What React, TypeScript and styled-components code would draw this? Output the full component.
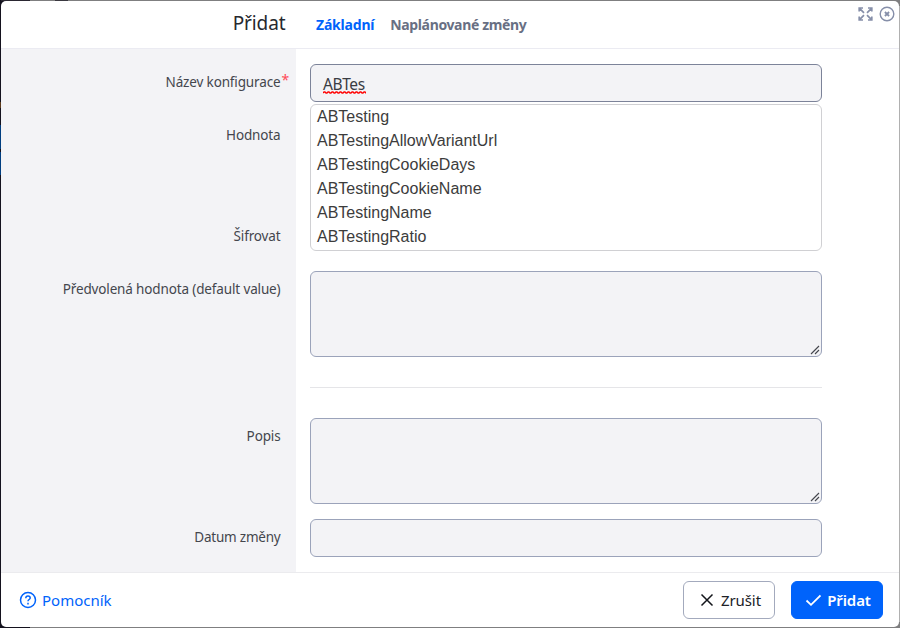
import React from "react";
import styled, { createGlobalStyle } from "styled-components";

const GlobalStyle = createGlobalStyle`
  *, *::before, *::after { box-sizing: border-box; }
  html, body { margin: 0; padding: 0; }
  body { overflow: hidden; background: #7f7f80; font-family: "Noto Sans", "Open Sans", sans-serif; color: #13151b; }
`;

const Backdrop = styled.div`
  width: 900px;
  height: 628px;
  padding: 1px;
  background:
    linear-gradient(#003e80, #003e80) 0 125px / 1px 24px no-repeat,
    linear-gradient(#003e80, #003e80) 0 152px / 1px 23px no-repeat,
    linear-gradient(#5a3a1c, #5a3a1c) 0 102px / 1px 6px no-repeat,
    linear-gradient(#14121e, #14121e) 0 0 / 1px 628px no-repeat,
    linear-gradient(#2a2731, #2a2731) 0 0 / 30px 1px no-repeat,
    linear-gradient(#3a3840, #3a3840) 55px 0 / 13px 1px no-repeat,
    linear-gradient(#14121e, #14121e) 0 627px / 30px 1px no-repeat,
    linear-gradient(#14121e, #14121e) 0 0 / 6px 6px no-repeat,
    linear-gradient(#14121e, #14121e) 0 622px / 6px 6px no-repeat,
    linear-gradient(#b0b0b0, #b0b0b0) 899px 6px / 1px 616px no-repeat,
    #7f7f80;
`;

const Dialog = styled.div`
  display: flex;
  flex-direction: column;
  width: 898px;
  height: 626px;
  overflow: hidden;
  background: #fff;
  border-radius: 5px;
`;

const Header = styled.header`
  position: relative;
  display: flex;
  flex: none;
  height: 48px;
  border-bottom: 1px solid #ebebf2;
`;

const Title = styled.h1`
  width: 284.5px;
  margin: 0;
  font-size: 19px;
  font-weight: 400;
  line-height: 45px;
  text-align: right;
  letter-spacing: -0.1px;
  color: #26282e;
`;

const Tabs = styled.nav`
  display: flex;
  gap: 16px;
  padding-left: 30.5px;
`;

const Tab = styled.a<{ $active?: boolean; $tracking: number }>`
  font-size: 14px;
  font-weight: 700;
  line-height: 47px;
  letter-spacing: ${(p) => p.$tracking}px;
  color: ${(p) => (p.$active ? "#0063fb" : "#686f83")};
  white-space: nowrap;
`;

const WindowTools = styled.div`
  position: absolute;
  top: 5px;
  right: 4px;
  display: flex;
  gap: 6px;
  align-items: center;
  svg { display: block; }
`;

const Body = styled.main`
  flex: 1;
  padding-top: 15px;
  background: linear-gradient(90deg, #f3f3f6 295px, #fff 295px);
`;

const Row = styled.div<{ $height: number }>`
  display: grid;
  grid-template-columns: 279.5px 512px;
  column-gap: 29.5px;
  height: ${(p) => p.$height}px;
  margin-bottom: 15px;
`;

const Label = styled.label<{ $tracking?: number }>`
  position: relative;
  justify-self: end;
  font-size: 13.5px;
  line-height: 36px;
  height: 36px;
  letter-spacing: ${(p) => p.$tracking ?? -0.14}px;
  white-space: nowrap;
  color: #44464d;
`;

const Required = styled.span`
  position: absolute;
  left: 100%;
  top: -2px;
  padding-left: 1px;
  font-size: 14px;
  color: #ff4b58;
`;

const Field = styled.div<{ $focused?: boolean }>`
  position: relative;
  display: flex;
  align-items: center;
  height: 100%;
  padding-left: 12px;
  background: #f3f3f6;
  border: 1px solid ${(p) => (p.$focused ? "#7c8399" : "#9ba3ba")};
  border-radius: 6px;
  font-size: 15.5px;
  color: #3a3c43;
`;

const Misspelled = styled.span`
  position: relative;
  padding-top: 1px;
  line-height: 20px;
  letter-spacing: -0.4px;
  svg { position: absolute; left: 0; bottom: 0; }
`;

const Grip = styled.svg`
  position: absolute;
  right: 1px;
  bottom: 1px;
`;

const Suggestions = styled.ul`
  position: absolute;
  z-index: 1;
  top: 39px;
  left: -1px;
  width: 512px;
  height: 146.5px;
  margin: 0;
  padding: 0 6px;
  list-style: none;
  background: #fff;
  border: 1px solid #d0d0d3;
  border-radius: 6px;
`;

const Suggestion = styled.li`
  height: 24px;
  line-height: 24px;
  font-family: "Liberation Sans", Arial, sans-serif;
  font-size: 16px;
  color: #3c3c3c;
`;

const Divider = styled.hr`
  width: 512px;
  height: 1px;
  margin: 30px 0 30px 309px;
  border: 0;
  background: #e5e5e8;
`;

const Footer = styled.footer`
  display: flex;
  flex: none;
  align-items: center;
  height: 55px;
  padding: 0 16px 0 18px;
  border-top: 1px solid #ebebee;
`;

const HelpLink = styled.a`
  display: flex;
  align-items: center;
  gap: 5px;
  margin-right: auto;
  font-size: 15px;
  color: #0063fb;
`;

const Button = styled.button<{ $primary?: boolean }>`
  display: flex;
  align-items: center;
  justify-content: center;
  gap: 6px;
  width: 92px;
  height: 38px;
  margin-left: 16px;
  padding: 0 0 0 2px;
  font: ${(p) => (p.$primary ? 600 : 400)} 15px "Noto Sans", sans-serif;
  letter-spacing: -0.1px;
  color: ${(p) => (p.$primary ? "#fff" : "#202228")};
  background: ${(p) => (p.$primary ? "#0063fb" : "#fff")};
  border: 1px solid ${(p) => (p.$primary ? "#0063fb" : "#a3aabd")};
  border-radius: 6px;
`;

const ResizeGrip = () => (
  <Grip width="10" height="10" viewBox="0 0 10 10" stroke="#44464d" strokeWidth="1.1">
    <path d="M1 9L9 1M5 9L9 5" />
  </Grip>
);

const suggestions = [
  "ABTesting",
  "ABTestingAllowVariantUrl",
  "ABTestingCookieDays",
  "ABTestingCookieName",
  "ABTestingName",
  "ABTestingRatio",
];

export default function App() {
  return (
    <>
      <GlobalStyle />
      <Backdrop>
        <Dialog role="dialog">
          <Header>
            <Title>Přidat</Title>
            <Tabs>
              <Tab $active $tracking={-0.2}>Základní</Tab>
              <Tab $tracking={-0.36}>Naplánované změny</Tab>
            </Tabs>
            <WindowTools>
              <svg width="15" height="16" viewBox="0 0 15 16" fill="none" stroke="#868fa9" strokeWidth="1.7">
                <path d="M1.2 5.5V2H5M1.5 2.3L6 6.8M10 2h3.8v3.5M13.5 2.3L9 6.8M1.2 10.5V14H5M1.5 13.7L6 9.2M10 14h3.8v-3.5M13.5 13.7L9 9.2" />
              </svg>
              <svg width="16" height="16" viewBox="0 0 16 16" fill="none" stroke="#868fa9">
                <circle cx="8" cy="8" r="6.8" strokeWidth="1.4" />
                <path d="M5.9 6L10.1 10M10.1 6L5.9 10" strokeWidth="1.8" />
              </svg>
            </WindowTools>
          </Header>
          <Body>
            <Row $height={38}>
              <Label>Název konfigurace<Required>*</Required></Label>
              <Field $focused>
                <Misspelled>
                  ABTes
                  <svg width="43" height="3" viewBox="0 0 43 3" fill="none" stroke="#f00" strokeWidth="1.3">
                    <path d={"M0 2" + "l1-1h1l1 1h1".repeat(11)} />
                  </svg>
                </Misspelled>
                <Suggestions>
                  {suggestions.map((name) => <Suggestion key={name}>{name}</Suggestion>)}
                </Suggestions>
              </Field>
            </Row>
            <Row $height={86}>
              <Label>Hodnota</Label>
              <Field><ResizeGrip /></Field>
            </Row>
            <Row $height={38}>
              <Label>Šifrovat</Label>
            </Row>
            <Row $height={86}>
              <Label>Předvolená hodnota (default value)</Label>
              <Field><ResizeGrip /></Field>
            </Row>
            <Divider />
            <Row $height={86}>
              <Label>Popis</Label>
              <Field><ResizeGrip /></Field>
            </Row>
            <Row $height={38}>
              <Label $tracking={-0.22}>Datum změny</Label>
              <Field />
            </Row>
          </Body>
          <Footer>
            <HelpLink>
              <svg width="18" height="18" viewBox="0 0 18 18" fill="none" stroke="#0063fb" strokeWidth="1.5">
                <circle cx="9" cy="9" r="7.5" />
                <path d="M6.8 7.2C6.8 5.6 7.8 5 9 5s2.2.8 2.2 2c0 1.5-2.2 1.5-2.2 3.2M9 11.8v1.6" />
              </svg>
              Pomocník
            </HelpLink>
            <Button>
              <svg width="16" height="16" viewBox="0 0 16 16" fill="none" stroke="#13151b" strokeWidth="1.5">
                <path d="M2.5 2.5L13.5 13.5M13.5 2.5L2.5 13.5" />
              </svg>
              Zrušit
            </Button>
            <Button $primary>
              <svg width="16" height="16" viewBox="0 0 16 16" fill="none" stroke="#fff" strokeWidth="1.8">
                <path d="M1.5 8.5L6 12.8L15.5 3.5" />
              </svg>
              Přidat
            </Button>
          </Footer>
        </Dialog>
      </Backdrop>
    </>
  );
}
